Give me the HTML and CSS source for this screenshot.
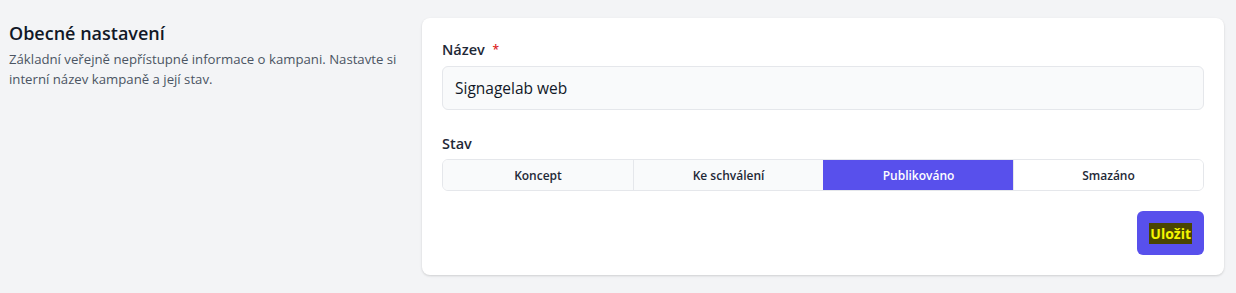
FILE: index.html
```html
<!DOCTYPE html>
<html lang="cs">
<head>
  <meta charset="UTF-8">
  <meta name="viewport" content="width=device-width, initial-scale=1.0">
  <title>Obecné nastavení</title>
  <link rel="stylesheet" href="styles.css">
</head>
<body>
  <div class="settings">
    <!-- Section description -->
    <div class="intro">
      <h2>Obecné nastavení</h2>
      <p>Základní veřejně nepřístupné informace o kampani. Nastavte si interní název kampaně a její stav.</p>
    </div>

    <!-- Form card -->
    <form class="card">
      <div class="field">
        <label for="name">Název <span class="required">*</span></label>
        <input type="text" id="name" name="name" value="Signagelab web">
      </div>

      <div class="field field-state">
        <span class="label">Stav</span>
        <div class="segments">
          <button type="button" class="segment">Koncept</button>
          <button type="button" class="segment">Ke schválení</button>
          <button type="button" class="segment active">Publikováno</button>
          <button type="button" class="segment">Smazáno</button>
        </div>
      </div>

      <div class="actions">
        <button type="submit" class="save"><span class="hl">Uložit</span></button>
      </div>
    </form>
  </div>
</body>
</html>
```

FILE: styles.css
```css
/* General styles */
body {
  font-family: "Open Sans", "Noto Sans", sans-serif;
  margin: 0;
  padding: 18px 12px 19px 9px;
  background-color: #f3f4f6;
  color: #111827;
}

.settings {
  display: grid;
  grid-template-columns: 391px 1fr;
  gap: 22px;
}

/* Intro column */
.intro h2 {
  margin: 3px 0 0;
  font-size: 18px;
  font-weight: 600;
  line-height: 24px;
  color: #111827;
}

.intro p {
  margin: 4px 0 0;
  font-size: 13.2px;
  line-height: 20px;
  color: #4b5563;
}

/* Card */
.card {
  background-color: #fff;
  border-radius: 8px;
  box-shadow: 0 1px 3px rgba(0, 0, 0, 0.1), 0 1px 2px rgba(0, 0, 0, 0.06);
  padding: 22px 20px 20px;
}

.field label,
.field .label {
  display: block;
  font-size: 14.5px;
  font-weight: 600;
  line-height: 20px;
  color: #1f2937;
  margin-bottom: 6px;
}

.required {
  color: #dc2626;
  font-size: 12px;
  vertical-align: top;
  margin-left: 4px;
}

input[type="text"] {
  box-sizing: border-box;
  width: 100%;
  height: 44px;
  padding: 0 12px;
  font-family: inherit;
  font-size: 15.5px;
  color: #111827;
  background-color: #f9fafb;
  border: 1px solid #e5e7eb;
  border-radius: 6px;
}

.field-state {
  margin-top: 24px;
}

.field-state .label {
  margin-bottom: 5px;
}

/* Segmented control */
.segments {
  display: grid;
  grid-template-columns: repeat(4, 1fr);
  border: 1px solid #e5e7eb;
  border-radius: 6px;
  overflow: hidden;
  height: 32px;
  box-sizing: border-box;
}

.segment {
  font-family: inherit;
  font-size: 12px;
  font-weight: 600;
  color: #1f2937;
  background-color: #f9fafb;
  border: none;
  border-left: 1px solid #e5e7eb;
  padding: 0;
  cursor: pointer;
}

.segment:first-child {
  border-left: none;
}

.segment.active {
  background-color: #5850ec;
  color: #fff;
  border-left-color: #5850ec;
}

.segment:last-child {
  background-color: #fff;
}

/* Actions */
.actions {
  display: flex;
  justify-content: flex-end;
  margin-top: 20px;
}

.save {
  height: 44px;
  padding: 0 12px;
  font-family: inherit;
  font-size: 14px;
  font-weight: 700;
  background-color: #5850ec;
  border: none;
  border-radius: 6px;
  cursor: pointer;
}

.save .hl {
  background-color: #4a4500;
  color: #f5f500;
  padding: 1px 1px;
}
```
